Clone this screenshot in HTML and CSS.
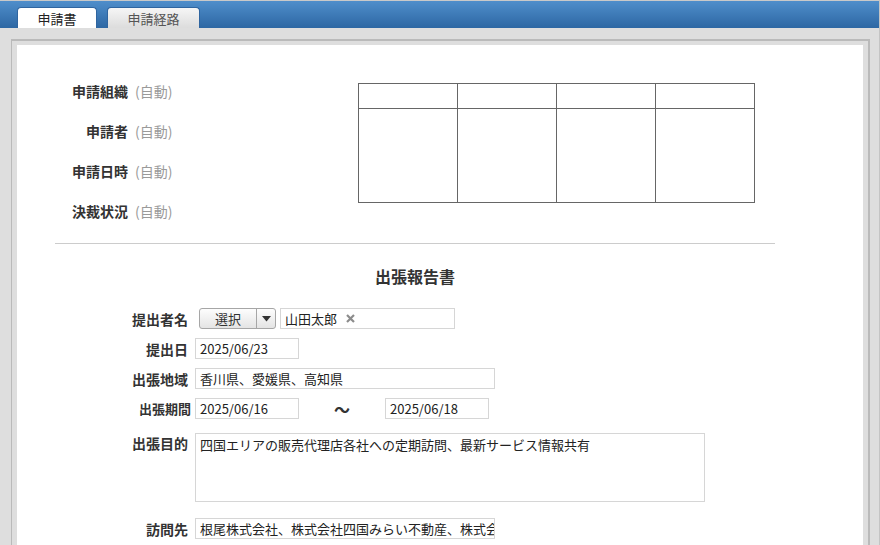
FILE: index.html
```html
<!DOCTYPE html>
<html lang="ja">
<head>
<meta charset="utf-8">
<title>出張報告書</title>
<link rel="stylesheet" href="styles.css">
</head>
<body>
<div class="page">
  <div class="tabbar">
    <div class="tab tab-active">申請書</div>
    <div class="tab tab-inactive">申請経路</div>
  </div>
  <div class="main">
    <div class="panel">
      <div class="sheet">
        <div class="content">
          <div class="header">
            <div class="meta">
              <div class="meta-row"><span class="meta-label">申請組織</span><span class="auto">(自動)</span></div>
              <div class="meta-row"><span class="meta-label">申請者</span><span class="auto">(自動)</span></div>
              <div class="meta-row"><span class="meta-label">申請日時</span><span class="auto">(自動)</span></div>
              <div class="meta-row"><span class="meta-label">決裁状況</span><span class="auto">(自動)</span></div>
            </div>
            <table class="stamp">
              <tr class="stamp-head"><td></td><td></td><td></td><td></td></tr>
              <tr class="stamp-body"><td></td><td></td><td></td><td></td></tr>
            </table>
          </div>
          <div class="divider"></div>
          <h1 class="title">出張報告書</h1>
          <div class="form">
            <div class="row">
              <div class="label">提出者名</div>
              <div class="picker">
                <span class="picker-main">選択</span>
                <span class="picker-arrow"><svg width="9" height="6" viewBox="0 0 9 6"><path d="M0 0H9L4.5 5.5Z" fill="#333"/></svg></span>
              </div>
              <div class="field field-name">山田太郎<svg class="remove" width="9" height="9" viewBox="0 0 9 9"><path d="M1 1L8 8M8 1L1 8" stroke="#8c8c8c" stroke-width="2.2"/></svg></div>
            </div>
            <div class="row">
              <div class="label">提出日</div>
              <div class="field field-date">2025/06/23</div>
            </div>
            <div class="row">
              <div class="label">出張地域</div>
              <div class="field field-wide">香川県、愛媛県、高知県</div>
            </div>
            <div class="row">
              <div class="label label-narrow">出張期間</div>
              <div class="field field-date">2025/06/16</div>
              <span class="tilde">～</span>
              <div class="field field-date">2025/06/18</div>
            </div>
            <div class="row row-area">
              <div class="label">出張目的</div>
              <div class="field field-area">四国エリアの販売代理店各社への定期訪問、最新サービス情報共有</div>
            </div>
            <div class="row row-last">
              <div class="label">訪問先</div>
              <div class="field field-wide">根尾株式会社、株式会社四国みらい不動産、株式会社南海トラベルサービス</div>
            </div>
          </div>
        </div>
      </div>
    </div>
  </div>
</div>
</body>
</html>
```
FILE: styles.css
```css
html, body {
  margin: 0;
  padding: 0;
  width: 880px;
  height: 545px;
  overflow: hidden;
}

body {
  font-family: "Noto Sans CJK JP", "Noto Sans", "DejaVu Sans", sans-serif;
  font-size: 13px;
  color: #333;
  background: #dedede;
}

.page {
  width: 880px;
  height: 545px;
  box-sizing: border-box;
  border-right: 1px solid #c4c4c4;
  display: flex;
  flex-direction: column;
}

.tabbar {
  height: 28px;
  flex: none;
  box-sizing: border-box;
  border-top: 1px solid #c9c9c9;
  background: linear-gradient(#4f8ecb, #2d67a3);
  display: flex;
  align-items: flex-end;
  padding-left: 17px;
  gap: 10px;
}

.tab {
  height: 21px;
  box-sizing: border-box;
  border: 1px solid #2f65a0;
  border-bottom: none;
  border-radius: 4px 4px 0 0;
  display: flex;
  align-items: center;
  justify-content: center;
  font-size: 13px;
  line-height: 1;
}

.tab-active {
  width: 80px;
  background: #fff;
  color: #222;
}

.tab-inactive {
  width: 93px;
  background: linear-gradient(#f6f6f6, #dcdcdc);
  color: #555;
}

.main {
  flex: 1;
  min-height: 0;
  padding: 11px 9px 0 11px;
  background: #dedede;
}

.panel {
  height: 100%;
  box-sizing: border-box;
  border-top: 2px solid #bababa;
  border-right: 2px solid #bababa;
  border-left: 1px solid #bababa;
  padding: 4px 5px 0 5px;
}

.sheet {
  height: 100%;
  background: #fff;
  padding-top: 36px;
  box-sizing: border-box;
}

.content {
  width: 720px;
  margin-left: 38px;
}

.header {
  display: flex;
  align-items: flex-start;
}

.meta {
  width: 303px;
  display: flex;
  flex-direction: column;
  gap: 20px;
}

.meta-row {
  display: flex;
  align-items: center;
  height: 20px;
}

.meta-label {
  width: 73px;
  text-align: right;
  font-weight: bold;
  font-size: 14px;
  color: #333;
}

.auto {
  margin-left: 7px;
  font-size: 14px;
  color: #9a9a9a;
}

.stamp {
  margin-top: 2px;
  border-collapse: collapse;
  width: 397px;
}

.stamp td {
  border: 1px solid #666;
  width: 98px;
  padding: 0;
}

.stamp-head td {
  height: 24px;
}

.stamp-body td {
  height: 93px;
}

.divider {
  margin-top: 22px;
  border-top: 1px solid #cccccc;
}

.title {
  margin: 21px 0 0;
  text-align: center;
  font-size: 16px;
  line-height: 22px;
  font-weight: bold;
  color: #333;
}

.form {
  margin-top: 21px;
}

.row {
  display: flex;
  align-items: center;
  height: 21px;
  margin-bottom: 9px;
}

.row-area {
  height: auto;
  align-items: flex-start;
  margin-top: 14px;
  margin-bottom: 16px;
}

.label {
  width: 133px;
  margin-right: 7px;
  text-align: right;
  font-weight: bold;
  font-size: 14px;
  line-height: 20px;
  color: #333;
  flex: none;
}

.label-narrow {
  font-size: 13px;
  width: 136px;
  margin-right: 4px;
}

.field {
  box-sizing: border-box;
  height: 21px;
  border: 1px solid #d6d6d6;
  padding: 0 4px;
  line-height: 19px;
  font-size: 13px;
  color: #222;
  white-space: nowrap;
  overflow: hidden;
  flex: none;
}

.field-date {
  width: 104px;
}

.field-wide {
  width: 300px;
}

.field-name {
  width: 175px;
  margin-left: 4px;
  display: flex;
  align-items: center;
}

.remove {
  margin-left: 9px;
}

.field-area {
  width: 510px;
  height: 69px;
  padding-top: 1px;
  white-space: normal;
}

.tilde {
  width: 86px;
  text-align: center;
  font-size: 16px;
  font-weight: bold;
  color: #333;
  flex: none;
}

.picker {
  margin-left: 4px;
  width: 77px;
  height: 21px;
  box-sizing: border-box;
  border: 1px solid #a6a6a6;
  border-radius: 3px;
  background: linear-gradient(#fdfdfd, #e4e4e4);
  display: flex;
  flex: none;
}

.picker-main {
  width: 56px;
  display: flex;
  align-items: center;
  justify-content: center;
  font-size: 13px;
  color: #333;
}

.picker-arrow {
  flex: 1;
  border-left: 1px solid #a6a6a6;
  display: flex;
  align-items: center;
  justify-content: center;
}
```
